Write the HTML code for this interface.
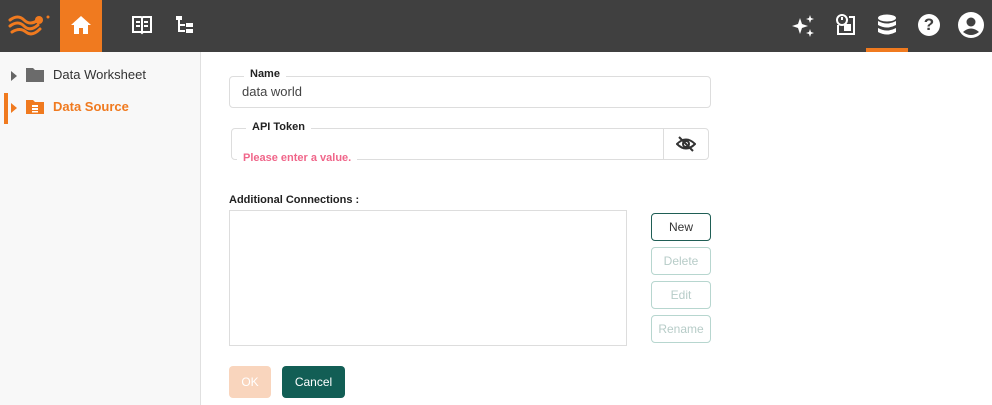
<!DOCTYPE html>
<html><head><style>
*{box-sizing:border-box;margin:0;padding:0}
body{width:992px;height:405px;overflow:hidden;background:#fff;font-family:"Liberation Sans",Arial,sans-serif;position:relative}
.top{position:absolute;left:0;top:0;width:992px;height:52px;background:#404040}
.abs{position:absolute}
.side{position:absolute;left:0;top:52px;width:201px;height:353px;background:#f8f8f8;border-right:1px solid #e0e0e0}
.lbl{position:absolute;font-size:11px;font-weight:bold;color:#222;background:#fff;padding:0 6px}
.box{position:absolute;border:1px solid #ddd;border-radius:4px}
.btn{position:absolute;left:651px;width:60px;height:28px;border:1px solid #b7d6cf;border-radius:4px;font-size:12px;color:#b7ccc8;text-align:center;line-height:26px}
</style></head><body>
<div class="top">
 <svg class="abs" style="left:8px;top:12px" width="44" height="26" viewBox="0 0 44 26"><g fill="none" stroke="#f07a1f" stroke-width="3" stroke-linecap="round"><path d="M2 8 Q10 2 16 8 T30 8"/><path d="M2 14 Q10 8 16 14 T30 13"/><path d="M4 20 Q12 15 18 20 T32 17"/></g><circle cx="31" cy="8" r="4" fill="#f07a1f"/><circle cx="40" cy="5" r="1.5" fill="#f07a1f"/></svg>
 <div class="abs" style="left:60px;top:0;width:42px;height:52px;background:#f07a1f"></div>
 <svg class="abs" style="left:70px;top:15px" width="22" height="20" viewBox="0 0 22 20"><path d="M11 1 L21 10 H18 V19 H13 V13 H9 V19 H4 V10 H1 Z" fill="#fff"/></svg>
 <svg class="abs" style="left:131px;top:14px" width="22" height="22" viewBox="0 0 22 22" fill="none" stroke="#fff" stroke-width="2"><path d="M2 3 H10 L11 4 L12 3 H20 V18 H12 L11 19 L10 18 H2 Z"/><path d="M11 4 V18 M5 8 H9 M13 8 H17 M5 12 H9 M13 12 H17"/></svg>
 <svg class="abs" style="left:175px;top:15px" width="20" height="20" viewBox="0 0 20 20" fill="#fff"><rect x="1" y="1" width="6" height="4"/><rect x="3" y="5" width="2" height="12"/><rect x="5" y="9" width="5" height="2"/><rect x="5" y="15" width="5" height="2"/><rect x="11" y="8" width="7" height="4"/><rect x="11" y="14" width="7" height="4"/></svg>
 <svg class="abs" style="left:792px;top:14px" width="24" height="24" viewBox="0 0 24 24" fill="#fff"><path d="M8 4 L10 10 L16 12 L10 14 L8 20 L6 14 L0 12 L6 10 Z"/><path d="M18 1 L19 4 L22 5 L19 6 L18 9 L17 6 L14 5 L17 4Z"/><path d="M18 15 L19 18 L22 19 L19 20 L18 23 L17 20 L14 19 L17 18Z"/></svg>
 <svg class="abs" style="left:835px;top:13px" width="22" height="24" viewBox="0 0 22 24" fill="none" stroke="#fff" stroke-width="2"><circle cx="7" cy="7" r="5"/><path d="M7 4 V7 M3 12 V21 H19 V4 H14"/><rect x="10" y="12" width="5" height="5" fill="#fff"/></svg>
 <svg class="abs" style="left:877px;top:14px" width="20" height="22" viewBox="0 0 20 22" fill="#fff"><ellipse cx="10" cy="4" rx="9" ry="3.5"/><path d="M1 7 Q10 12 19 7 V11 Q10 16 1 11Z"/><path d="M1 14 Q10 19 19 14 V18 Q10 23 1 18Z"/></svg>
 <div class="abs" style="left:866px;top:48px;width:42px;height:4px;background:#f07a1f"></div>
 <div class="abs" style="left:918px;top:14px;width:22px;height:22px;border-radius:50%;background:#fff;color:#404040;font-weight:bold;font-size:17px;text-align:center;line-height:22px">?</div>
 <svg class="abs" style="left:958px;top:12px" width="26" height="26" viewBox="0 0 26 26"><circle cx="13" cy="13" r="13" fill="#fff"/><circle cx="13" cy="10" r="4.5" fill="#404040"/><path d="M5 20 Q13 13 21 20 Q13 26 5 20Z" fill="#404040"/></svg>
</div>
<div class="side">
 <div class="abs" style="left:11px;top:19px;width:0;height:0;border-left:6px solid #666;border-top:5px solid transparent;border-bottom:5px solid transparent"></div>
 <svg class="abs" style="left:26px;top:15px" width="18" height="15" viewBox="0 0 18 15"><path d="M0 1 H7 L9 3 H18 V15 H0Z" fill="#6b6b6b"/></svg>
 <div class="abs" style="left:53px;top:15px;font-size:13px;color:#333">Data Worksheet</div>
 <div class="abs" style="left:4px;top:41px;width:4px;height:31px;background:#f07a1f"></div>
 <div class="abs" style="left:11px;top:51px;width:0;height:0;border-left:6px solid #f07a1f;border-top:5px solid transparent;border-bottom:5px solid transparent"></div>
 <svg class="abs" style="left:26px;top:47px" width="18" height="15" viewBox="0 0 18 15"><path d="M0 1 H7 L9 3 H18 V15 H0Z" fill="#f07a1f"/><rect x="6" y="6" width="6" height="2" fill="#fff"/><rect x="6" y="9" width="6" height="2" fill="#fff"/><rect x="6" y="12" width="6" height="1.5" fill="#fff"/></svg>
 <div class="abs" style="left:53px;top:47px;font-size:13px;font-weight:bold;color:#f07a1f">Data Source</div>
</div>
<div class="box" style="left:229px;top:76px;width:482px;height:32px"></div>
<div class="lbl" style="left:244px;top:68px">Name</div>
<div class="abs" style="left:242px;top:84px;font-size:13px;color:#444">data world</div>
<div class="box" style="left:231px;top:128px;width:478px;height:32px"></div>
<div class="abs" style="left:663px;top:129px;width:1px;height:30px;background:#ddd"></div>
<div class="lbl" style="left:246px;top:121px">API Token</div>
<div class="lbl" style="left:237px;top:152px;color:#f0668a;padding:0 6px">Please enter a value.</div>
<svg class="abs" style="left:676px;top:135px" width="20" height="18" viewBox="0 0 20 18" fill="none" stroke="#333" stroke-width="2"><path d="M1 9 Q10 0 19 9 Q10 18 1 9Z"/><circle cx="10" cy="9" r="3"/><path d="M3 2 L17 16"/></svg>
<div class="abs" style="left:229px;top:194px;font-size:11px;font-weight:bold;color:#222">Additional Connections :</div>
<div class="abs" style="left:229px;top:210px;width:398px;height:136px;border:1px solid #ddd"></div>
<div class="btn" style="top:213px;border-color:#1f5e55;color:#333">New</div>
<div class="btn" style="top:247px">Delete</div>
<div class="btn" style="top:281px">Edit</div>
<div class="btn" style="top:315px">Rename</div>
<div class="abs" style="left:229px;top:366px;width:42px;height:32px;background:#f9d5bd;border-radius:4px;color:#fff;font-size:12px;text-align:center;line-height:32px">OK</div>
<div class="abs" style="left:282px;top:366px;width:63px;height:32px;background:#125e55;border-radius:4px;color:#fff;font-size:12px;text-align:center;line-height:32px">Cancel</div>
</body></html>
